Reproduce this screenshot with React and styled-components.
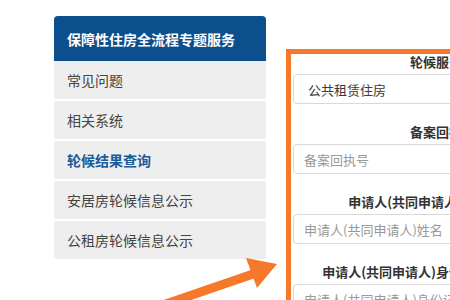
import React from "react";
import styled, { createGlobalStyle } from "styled-components";

const GlobalStyle = createGlobalStyle`
	html, body {
		margin: 0;
		padding: 0;
		background: #fff;
	}
	body {
		font-family: "Liberation Sans", "Noto Sans CJK SC", sans-serif;
	}
`;

const menu = [
	{ label: "常见问题" },
	{ label: "相关系统" },
	{ label: "轮候结果查询", active: true },
	{ label: "安居房轮候信息公示" },
	{ label: "公租房轮候信息公示" },
];

const fields = [
	{ label: "轮候服务类型", value: "公共租赁住房", select: true },
	{ label: "备案回执号码", placeholder: "备案回执号" },
	{ label: "申请人(共同申请人)姓名", placeholder: "申请人(共同申请人)姓名" },
	{ label: "申请人(共同申请人)身份证号", placeholder: "申请人(共同申请人)身份证号" },
];

const Page = styled.div`
	position: relative;
	width: 450px;
	height: 300px;
	overflow: hidden;
	display: flex;
	align-items: flex-start;
	gap: 20px;
	padding-left: 54px;
	box-sizing: border-box;
`;

const Sidebar = styled.nav`
	width: 212px;
	margin-top: 16px;
	display: flex;
	flex-direction: column;
	gap: 2px;
	flex-shrink: 0;
`;

const SideHeader = styled.div`
	height: 45px;
	margin-bottom: -2px;
	display: flex;
	align-items: center;
	padding-left: 13px;
	background: #0c4f8d;
	border-radius: 4px 4px 0 0;
	color: #fff;
	font-size: 14px;
	font-weight: bold;
	font-family: "Noto Sans CJK SC", sans-serif;
`;

const SideItem = styled.div`
	height: 38px;
	display: flex;
	align-items: center;
	padding-left: 13px;
	background: #eeeeee;
	border-radius: 2px;
	color: ${(p) => (p.$active ? "#1b5b98" : "#444")};
	font-weight: ${(p) => (p.$active ? "bold" : "normal")};
	font-size: 14px;
	font-family: "Noto Sans CJK SC", sans-serif;
`;

const Frame = styled.section`
	margin-top: 49px;
	width: 320px;
	height: 300px;
	flex-shrink: 0;
	border-top: 5px solid #f5782b;
	border-left: 5px solid #f5782b;
	padding-left: 2px;
	background: #fff;
`;

const Field = styled.div`
	width: 260px;
	margin-bottom: 20px;
`;

const Label = styled.div`
	height: 16px;
	line-height: 16px;
	margin-bottom: 4px;
	text-align: right;
	padding-right: 65px;
	white-space: nowrap;
	color: #333;
	font-size: 13px;
	font-weight: bold;
	font-family: "Noto Sans CJK SC", sans-serif;
`;

const Box = styled.div`
	height: 30px;
	box-sizing: border-box;
	display: flex;
	align-items: center;
	padding-left: ${(p) => (p.$select ? "14px" : "10px")};
	border: 1px solid #d9d9d9;
	border-radius: 4px;
	background: #fff;
	color: ${(p) => (p.$select ? "#3a3a3a" : "#999")};
	font-size: 13px;
	white-space: nowrap;
	font-family: "Noto Sans CJK SC", sans-serif;
`;

const Arrow = styled.svg`
	position: absolute;
	left: 0;
	top: 0;
	pointer-events: none;
`;

export default function App() {
	return (
		<>
			<GlobalStyle />
			<Page>
				<Sidebar>
					<SideHeader>保障性住房全流程专题服务</SideHeader>
					{menu.map((m) => (
						<SideItem key={m.label} $active={m.active}>
							{m.label}
						</SideItem>
					))}
				</Sidebar>
				<Frame>
					{fields.map((f) => (
						<Field key={f.label}>
							<Label>{f.label}</Label>
							<Box $select={f.select}>{f.value || f.placeholder}</Box>
						</Field>
					))}
				</Frame>
				<Arrow width="450" height="300" viewBox="0 0 450 300">
					<line x1="160" y1="306" x2="256" y2="273" stroke="#f5782b" strokeWidth="9" />
					<polygon points="246,258 277,264 257,288" fill="#f5782b" />
				</Arrow>
			</Page>
		</>
	);
}
